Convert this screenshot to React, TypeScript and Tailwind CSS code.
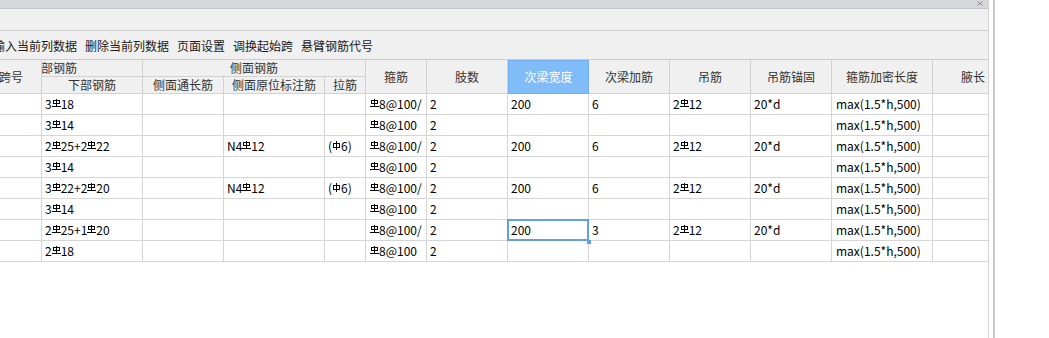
import type { ReactNode } from "react";

// HRB400 rebar mark (三级钢)
function Hrb() {
  return (
    <svg width="9" height="8" viewBox="0 0 9 8" className="inline-block align-[2px]" shapeRendering="crispEdges">
      <g stroke="currentColor" strokeWidth="1" fill="none">
        <path d="M4.5 0V7" />
        <rect x="1.5" y="1.5" width="6" height="3" />
        <path d="M0 7.5H9" />
      </g>
    </svg>
  );
}

// HPB300 rebar mark
function Hpb() {
  return (
    <svg width="9" height="9" viewBox="0 0 9 9" className="inline-block align-[1px]" shapeRendering="crispEdges">
      <g stroke="currentColor" strokeWidth="1" fill="none">
        <path d="M4.5 0V9" />
        <rect x="1.5" y="2.5" width="6" height="3.5" />
      </g>
    </svg>
  );
}

function rebar(text: string): ReactNode {
  const parts: ReactNode[] = [];
  let buf = "";
  [...text].forEach((ch, i) => {
    if (ch === "#" || ch === "$") {
      if (buf) parts.push(buf);
      buf = "";
      parts.push(ch === "#" ? <Hrb key={i} /> : <Hpb key={i} />);
    } else buf += ch;
  });
  if (buf) parts.push(buf);
  return parts;
}

const MAX = "max(1.5*h,500)";

// columns: 跨号, 下部钢筋, 侧面通长筋, 侧面原位标注筋, 拉筋, 箍筋, 肢数, 次梁宽度, 次梁加筋, 吊筋, 吊筋锚固, 箍筋加密长度, 腋长
const rows: string[][] = [
  ["", "3#18", "", "", "", "#8@100/", "2", "200", "6", "2#12", "20*d", MAX, ""],
  ["", "3#14", "", "", "", "#8@100", "2", "", "", "", "", MAX, ""],
  ["", "2#25+2#22", "", "N4#12", "($6)", "#8@100/", "2", "200", "6", "2#12", "20*d", MAX, ""],
  ["", "3#14", "", "", "", "#8@100", "2", "", "", "", "", MAX, ""],
  ["", "3#22+2#20", "", "N4#12", "($6)", "#8@100/", "2", "200", "6", "2#12", "20*d", MAX, ""],
  ["", "3#14", "", "", "", "#8@100", "2", "", "", "", "", MAX, ""],
  ["", "2#25+1#20", "", "", "", "#8@100/", "2", "200", "3", "2#12", "20*d", MAX, ""],
  ["", "2#18", "", "", "", "#8@100", "2", "", "", "", "", MAX, ""],
];

const singleHeads = ["箍筋", "肢数", "次梁宽度", "次梁加筋", "吊筋", "吊筋锚固", "箍筋加密长度", "腋长"];

const head = "bg-[#f0f0f0] border-r border-b border-[#d2d2d2] flex items-center justify-center text-[#333] overflow-hidden whitespace-nowrap";
const cell = "bg-white border-r border-b border-[#d6d6d6] flex items-center pl-[3px] text-black overflow-hidden";

const tools = ["输入当前列数据", "删除当前列数据", "页面设置", "调换起始跨", "悬臂钢筋代号"];

export default function App() {
  return (
    <div className="flex h-[338px] w-[1049px] bg-white font-['Noto_Sans_CJK_SC','Noto_Sans',sans-serif] text-[12px] leading-[16px]">
      <div className="flex w-[989px] flex-col border-r border-[#d2d2d2]">
        <div className="flex h-[9px] shrink-0 items-start justify-end border-b border-[#c6c7cb] bg-[#d6d7db] pr-[5px]">
          <svg width="6" height="5" viewBox="0 0 6 5" className="mt-[1px] text-[#8c8c8c]">
            <path d="M0.5 0.5L5.5 4.5M5.5 0.5L0.5 4.5" stroke="currentColor" strokeWidth="1" />
          </svg>
        </div>
        <div className="h-[22px] shrink-0 border-b border-[#cdcdcd] bg-[#f0f0f0]" />
        <div className="flex h-[28px] shrink-0 items-center gap-[8px] overflow-hidden bg-[#f0f0f0] pt-[2px] text-[#1a1a1a]">
          {tools.map((t, i) => (
            <span key={t} className={i === 0 ? "-ml-[7px] shrink-0 whitespace-nowrap" : "shrink-0 whitespace-nowrap"}>
              {t}
            </span>
          ))}
        </div>
        <div className="relative flex-1 overflow-hidden border-t border-[#cccccc]">
          <div className="grid w-[1013px] grid-cols-[42px_101px_81px_101px_41px_61px_81px_81px_81px_81px_81px_101px_81px] grid-rows-[17px_17px_repeat(8,21px)]">
            <div className={`${head} row-span-2 !justify-start`}>
              <span className="-ml-[1px]">跨号</span>
            </div>
            <div className={`${head} !justify-start`}>
              <span className="-ml-[1px]">部钢筋</span>
            </div>
            <div className={`${head} col-span-3`}>侧面钢筋</div>
            {singleHeads.map((h) =>
              h === "次梁宽度" ? (
                <div
                  key={h}
                  className="row-span-2 flex items-center justify-center border border-[#72adf0] bg-[#80bcf8] text-white"
                >
                  {h}
                </div>
              ) : (
                <div key={h} className={`${head} row-span-2`}>
                  {h}
                </div>
              )
            )}
            <div className={head}>下部钢筋</div>
            <div className={head}>侧面通长筋</div>
            <div className={head}>侧面原位标注筋</div>
            <div className={head}>拉筋</div>

            {rows.map((r, ri) =>
              r.map((v, ci) => {
                const sel = ri === 6 && ci === 7;
                return (
                  <div
                    key={`${ri}-${ci}`}
                    className={`${cell} ${ci === 5 || ci === 11 ? "pl-[4px]" : ""} ${sel ? "relative !overflow-visible" : ""}`}
                  >
                    <span className="block overflow-hidden whitespace-nowrap">{rebar(v)}</span>
                    {sel && (
                      <>
                        <div className="pointer-events-none absolute -inset-px border-2 border-[#619fe6]" />
                        <div className="absolute -right-[3px] -bottom-[4px] h-[4px] w-[4px] bg-[#619fe6]" />
                      </>
                    )}
                  </div>
                );
              })
            )}
          </div>
        </div>
      </div>
      <div className="w-[4px]" />
      <div className="w-[2px] bg-[#c7c9cc]" />
    </div>
  );
}
